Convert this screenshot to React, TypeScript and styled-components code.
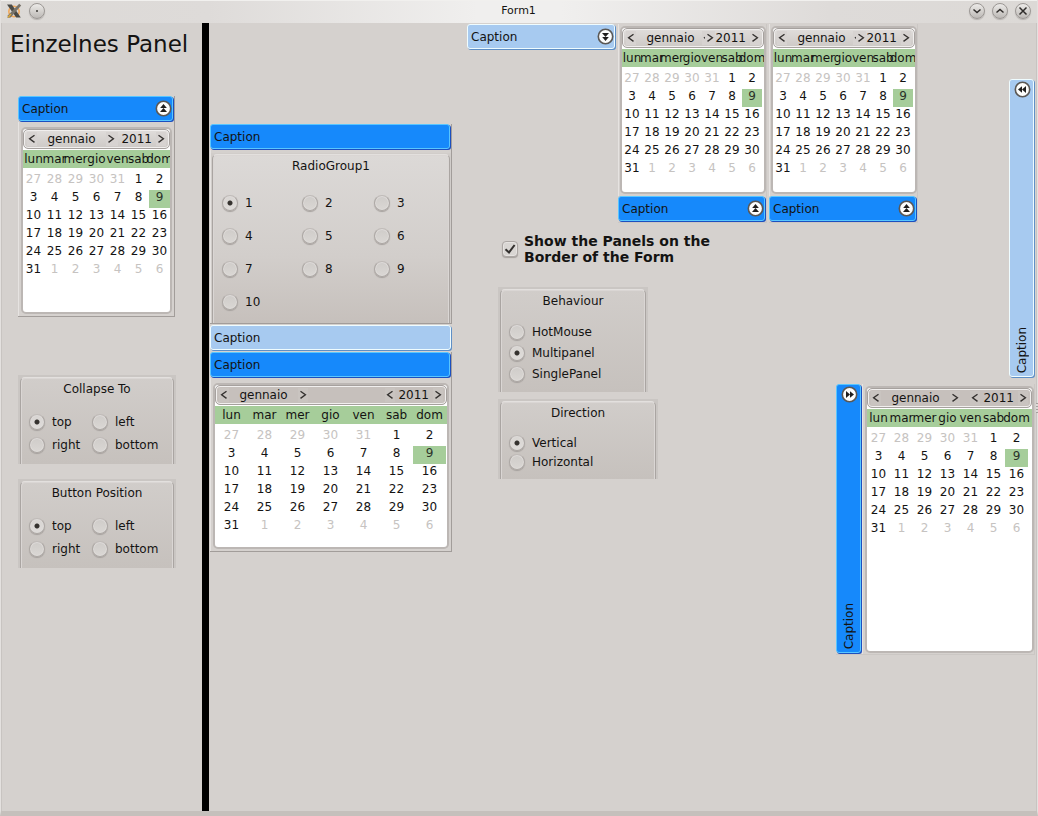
import React, { useId } from "react";
import styled, { createGlobalStyle, css } from "styled-components";

const GlobalStyle = createGlobalStyle`
  * { box-sizing: border-box; }
  body {
    margin: 0;
    font: 12px/14px "DejaVu Sans", Verdana, sans-serif;
    color: #141312;
    background: #d5d1ce;
  }
  button, input { margin: 0; padding: 0; font: inherit; color: inherit; }
`;

/* ---------- window frame ---------- */

const Window = styled.div`
  display: flex;
  flex-direction: column;
  min-height: 100vh;
  background: #d5d1ce;
  border-left: 1px solid #e4e1df;
  border-right: 1px solid #e4e1df;
  border-bottom: 5px solid #c5c0bc;
`;

const TitleBar = styled.header`
  display: grid;
  grid-template-columns: 1fr auto 1fr;
  align-items: center;
  height: 23px;
  padding: 0 6px 2px 5px;
  border-top: 1px solid #f1f0ee;
  background: linear-gradient(90deg, #dcd9d6 0%, #dedbd9 20%, #f0efee 46%, #f0efee 54%, #dedbd9 80%, #dcd9d6 100%);
`;

const Title = styled.h1`
  margin: 0;
  font-size: 11px;
  line-height: 14px;
  font-weight: normal;
`;

const TitleGroup = styled.div<{ $end?: boolean }>`
  display: flex;
  align-items: center;
  gap: 7px;
  justify-content: ${(p) => (p.$end ? "flex-end" : "flex-start")};
`;

const WindowButton = styled.button`
  display: grid;
  place-items: center;
  width: 16px;
  height: 16px;
  border: 1px solid #9b9794;
  border-radius: 50%;
  background: linear-gradient(#eceae8, #bdb9b6);
  box-shadow: 0 1px 1px #b5b1ae;
`;

const Body = styled.div`
  display: flex;
  flex: 1;
  align-items: stretch;
`;

const Aside = styled.aside`
  flex: none;
  width: 201px;
  padding: 0 0 0 16px;
  border-left: 1px solid #c8c4c1;
`;

const Heading = styled.h2`
  margin: 0 0 38px -8px;
  padding-top: 8px;
  font-size: 23px;
  line-height: 27px;
  font-weight: normal;
  white-space: nowrap;
`;

const Divider = styled.div`
  flex: none;
  width: 7px;
  background: #000;
`;

const Main = styled.main`
  position: relative;
  display: flex;
  flex: 1;
  min-width: 0;
  padding: 1px 1px 0 1px;
  border-right: 1px solid #c8c4c1;

  /* grip of the splitter on the window edge */
  &::after {
    content: "";
    position: absolute;
    top: 380px;
    right: -2px;
    width: 2px;
    height: 10px;
    background: repeating-linear-gradient(#a5a09d 0 1px, #dedbd9 1px 3px);
  }
`;

/* ---------- roll-out panels ---------- */

type Tone = "open" | "closed";

const Panel = styled.section<{ $row?: boolean; $faint?: boolean }>`
  display: flex;
  flex-direction: ${(p) => (p.$row ? "row" : "column")};
  border: 1px solid ${(p) => (p.$faint ? "#cbc7c4" : "#a29d9a")};
  border-width: 0 1px 1px 0;
`;

const PanelBody = styled.div<{ $pad: string }>`
  display: flex;
  flex: 1;
  flex-direction: column;
  min-width: 0;
  padding: ${(p) => p.$pad};
  border-left: 1px solid #e6e3e1;
`;

const captionTone = {
  open: css`
    background: #1689fb;
    border-color: #58c6ff;
    box-shadow: 1px 1px 0 #1c4fbf;
  `,
  closed: css`
    background: #a7caf0;
    border-color: #effcff;
    box-shadow: 1px 1px 0 #5f8fc6;
  `,
};

const CaptionBar = styled.header<{ $tone: Tone; $vertical?: boolean }>`
  display: flex;
  align-items: center;
  justify-content: space-between;
  flex: none;
  border-width: 1px;
  border-style: solid;
  border-radius: 3px;
  ${(p) => captionTone[p.$tone]}
  ${(p) =>
    p.$vertical
      ? css`
          flex-direction: column;
          width: 25px;
          margin: 0 1px 1px 0;
          padding: 0 0 3px;
        `
      : css`
          height: 25px;
          margin: 0 1px 1px 0;
          padding: 0 0 0 3px;
        `}
`;

const CaptionText = styled.span<{ $vertical?: boolean }>`
  ${(p) =>
    p.$vertical &&
    css`
      writing-mode: vertical-rl;
      transform: rotate(180deg);
    `}
`;

const RoundButton = styled.button`
  display: block;
  width: 19px;
  height: 19px;
  border: 0;
  background: none;
  svg { display: block; margin: 1px 0 1px 2px; }
`;

type Dir = "up" | "down" | "left" | "right";
const TURN: Record<Dir, number> = { up: 0, right: 90, down: 180, left: 270 };

function CollapseIcon({ dir }: { dir: Dir }) {
  return (
    <svg width="17" height="17" viewBox="0 0 17 17" aria-hidden="true">
      <circle cx="8.5" cy="8.5" r="7.2" fill="#fdfdfc" stroke="#5b5855" strokeWidth="1.6" />
      <g transform={`rotate(${TURN[dir]} 8.5 8.5)`} fill="#1f1d1c">
        <path d="M8.5 4 11.8 8H5.2Z" />
        <path d="M8.5 8 12 12H5Z" />
      </g>
    </svg>
  );
}

function Caption({ tone, dir, vertical }: { tone: Tone; dir?: Dir; vertical?: boolean }) {
  const button = dir && (
    <RoundButton type="button" aria-label={`Toggle panel ${dir}`}>
      <CollapseIcon dir={dir} />
    </RoundButton>
  );
  const text = <CaptionText $vertical={vertical}>Caption</CaptionText>;
  return (
    <CaptionBar $tone={tone} $vertical={vertical}>
      {vertical ? button : text}
      {vertical ? text : button}
    </CaptionBar>
  );
}

/* ---------- calendar ---------- */

const CalendarBox = styled.div<{ $height: number }>`
  min-height: ${(p) => p.$height}px;
  overflow: hidden;
  border: 2px solid #bcb7b4;
  border-radius: 5px;
  background: #fff;
`;

const Nav = styled.div<{ $dark?: boolean }>`
  display: grid;
  align-items: center;
  height: 20px;
  margin-bottom: 1px;
  border: 1px solid #a6a19e;
  border-radius: 5px;
  box-shadow: inset 0 0 0 1px #f1efee;
  background: ${(p) => (p.$dark ? "#c6c0bc" : "linear-gradient(#e0dddb, #cdc9c6)")};
  > * { grid-area: 1 / 1; }
`;

const NavGroup = styled.div<{ $end?: boolean }>`
  display: flex;
  align-items: center;
  justify-self: ${(p) => (p.$end ? "end" : "start")};
  z-index: ${(p) => (p.$end ? 0 : 1)};
  margin: 0 3px;
`;

const NavButton = styled.button<{ $dark?: boolean }>`
  display: grid;
  place-items: center;
  width: 10px;
  height: 14px;
  border: 0;
  background: ${(p) => (p.$dark ? "#c9c4c0" : "#d7d3d1")};
`;

const Month = styled.span`
  width: 69px;
  text-align: center;
`;

const Year = styled.span`
  padding: 0 4px 0 3px;
`;

const Days = styled.table`
  width: 100%;
  table-layout: fixed;
  border-collapse: collapse;
`;

const DayCol = styled.col<{ $width: number }>`
  width: ${(p) => p.$width}px;
`;

const WeekDay = styled.th`
  height: 18px;
  padding: 1px 0 0;
  font-weight: normal;
  line-height: 17px;
  text-align: center;
  white-space: nowrap;
  background: #a6cd9a;
  &:last-child { box-shadow: 4px 0 0 #a6cd9a; }
`;

/* Names wider than their column spill evenly over both neighbours. */
const DayName = styled.span`
  display: block;
  margin: 0 -8px;
`;

const Weeks = styled.tbody`
  &::before {
    content: "";
    display: table-row;
    height: 4px;
  }
`;

const Day = styled.td<{ $muted: boolean; $today: boolean }>`
  height: 18px;
  padding: 0 0 4px;
  text-align: center;
  color: ${(p) => (p.$muted ? "#c6c3c1" : p.$today ? "#2b332a" : "#141312")};
  background: ${(p) => (p.$today ? "#a6cd9a" : "transparent")};
`;

const WEEKDAYS = ["lun", "mar", "mer", "gio", "ven", "sab", "dom"];
const CELLS = Array.from({ length: 42 }, (_, i) => {
  const n = i - 4;
  return { label: n < 1 ? 31 + n : n > 31 ? n - 31 : n, muted: n < 1 || n > 31, today: n === 9 };
});
const WEEKS = Array.from({ length: 6 }, (_, w) => CELLS.slice(w * 7, w * 7 + 7));

function Chevron({ back }: { back?: boolean }) {
  return (
    <svg width="8" height="10" viewBox="0 0 8 10" aria-hidden="true">
      <path
        d={back ? "M6.5 1.2 1.6 4.8 6.5 8.4" : "M1.5 1.2 6.4 4.8 1.5 8.4"}
        fill="none"
        stroke="#353230"
        strokeWidth="1.4"
      />
    </svg>
  );
}

function Calendar({ col, height, dark }: { col: number; height: number; dark?: boolean }) {
  return (
    <CalendarBox $height={height}>
      <Nav $dark={dark}>
        <NavGroup>
          <NavButton type="button" $dark={dark} aria-label="Previous month"><Chevron back /></NavButton>
          <Month>gennaio</Month>
          <NavButton type="button" $dark={dark} aria-label="Next month"><Chevron /></NavButton>
        </NavGroup>
        <NavGroup $end>
          <NavButton type="button" $dark={dark} aria-label="Previous year"><Chevron back /></NavButton>
          <Year>2011</Year>
          <NavButton type="button" $dark={dark} aria-label="Next year"><Chevron /></NavButton>
        </NavGroup>
      </Nav>
      <Days>
        <colgroup>
          {WEEKDAYS.map((d) => <DayCol key={d} $width={col} />)}
          <col />
        </colgroup>
        <thead>
          <tr>{WEEKDAYS.map((d) => <WeekDay key={d} scope="col"><DayName>{d}</DayName></WeekDay>)}</tr>
        </thead>
        <Weeks>
          {WEEKS.map((week, w) => (
            <tr key={w}>
              {week.map((c, i) => <Day key={i} $muted={c.muted} $today={c.today}>{c.label}</Day>)}
            </tr>
          ))}
        </Weeks>
      </Days>
    </CalendarBox>
  );
}

/* ---------- radio groups ---------- */

type Look = "plain" | "light" | "compact";

const GroupBox = styled.div<{ $look: Look; $width?: number }>`
  display: flex;
  flex-direction: column;
  width: ${(p) => (p.$width ? `${p.$width}px` : "auto")};
  border: 2px solid #cac6c3;
  border-bottom: 0;
  background: #cac6c3;
  ${(p) => p.$look === "light" && css`border: 1px solid #d1cdca; border-bottom: 0; background: #d1cdca;`}
`;

const facePadding: Record<Look, string> = {
  plain: "3px 8px 6px",
  light: "3px 9px 5px",
  compact: "3px 8px 8px",
};

const GroupFace = styled.div<{ $look: Look }>`
  flex: 1;
  padding: ${(p) => facePadding[p.$look]};
  border: 1px solid #aaa5a2;
  border-top-color: #e3e0de;
  border-bottom: 0;
  border-radius: 5px 5px 0 0;
  box-shadow: inset 1px 1px 0 #dad6d4, inset -1px 0 0 #dad6d4;
  background: ${(p) =>
    p.$look === "light" ? "linear-gradient(#dcd9d7, #d2cecb 60%, #c6c0bc)" : "linear-gradient(#d1cdca, #c6c1bd)"};
`;

const GroupTitle = styled.div<{ $look: Look }>`
  margin-bottom: ${(p) => (p.$look === "plain" ? 13 : 12)}px;
  line-height: 16px;
  text-align: center;
`;

const Options = styled.div<{ $columns: string; $row: number }>`
  display: grid;
  grid-template-columns: ${(p) => p.$columns};
  grid-auto-rows: ${(p) => p.$row}px;
  align-items: center;
`;

const Option = styled.label`
  display: flex;
  align-items: center;
  gap: 7px;
  white-space: nowrap;
`;

const RadioInput = styled.input`
  flex: none;
  appearance: none;
  width: 16px;
  height: 16px;
  border: 1px solid #aca7a4;
  border-top-color: #c0bbb8;
  border-radius: 50%;
  background: linear-gradient(#cfccc9, #dad7d4);
  box-shadow: inset 0 0 0 1px #dedbd9, 0 1px 1px #a5a09d;
  &:checked {
    background: radial-gradient(circle, #35322f 0 2px, transparent 3px), linear-gradient(#d8d5d2, #dfdcda);
  }
`;

function RadioGroup(props: {
  title: string;
  items: string[];
  selected: string;
  columns?: string;
  row: number;
  look?: Look;
  width?: number;
}) {
  const id = useId();
  const look = props.look ?? "plain";
  return (
    <GroupBox role="radiogroup" aria-labelledby={id} $look={look} $width={props.width}>
      <GroupFace $look={look}>
        <GroupTitle id={id} $look={look}>{props.title}</GroupTitle>
        <Options $columns={props.columns ?? "1fr"} $row={props.row}>
          {props.items.map((item) => (
            <Option key={item}>
              <RadioInput type="radio" name={id} defaultChecked={item === props.selected} />
              {item}
            </Option>
          ))}
        </Options>
      </GroupFace>
    </GroupBox>
  );
}

/* ---------- page areas ---------- */

const AsidePanel = styled.div`
  width: 157px;
  margin-bottom: 58px;
`;

const AsideGroups = styled.div`
  display: grid;
  grid-auto-rows: 89px;
  gap: 15px;
  width: 158px;
`;

const Stack = styled.div`
  display: flex;
  flex: none;
  flex-direction: column;
  gap: 1px;
  width: 242px;
  padding-top: 100px;
`;

const FormArea = styled.div`
  display: grid;
  flex: 1;
  min-width: 0;
  grid-template-columns: 1fr 199px;
  grid-template-rows: auto 1fr;
  margin-left: 15px;
`;

const TopStrip = styled.div`
  display: flex;
  grid-area: 1 / 1 / 2 / 3;
  align-items: flex-start;
  gap: 2px;
  > * { width: 149px; flex: none; }
  > header { width: 148px; }
`;

const Settings = styled.div`
  display: flex;
  flex-direction: column;
  grid-area: 2 / 1;
  align-items: flex-start;
  gap: 7px;
  padding: 10px 0 0 31px;
`;

const CheckLabel = styled.label`
  display: flex;
  align-items: center;
  gap: 6px;
  margin-bottom: 15px;
  padding-left: 4px;
  font-size: 14px;
  line-height: 16px;
  font-weight: bold;
`;

const CheckText = styled.span`
  width: 200px;
`;

const CheckFrame = styled.span`
  display: grid;
  flex: none;
  > * { grid-area: 1 / 1; }
  svg { pointer-events: none; }
`;

const CheckInput = styled.input`
  appearance: none;
  width: 16px;
  height: 16px;
  border: 1px solid #aca7a4;
  border-radius: 4px;
  background: #d9d6d3;
  box-shadow: inset 0 0 0 1px #e6e3e1, 0 1px 1px #a5a09d;
`;

const Rail = styled.div`
  display: flex;
  flex-direction: column;
  grid-area: 1 / 2 / 3 / 3;
  align-items: flex-end;
  gap: 6px;
  padding-top: 55px;
`;

const RailTab = styled.div`
  display: flex;
  min-height: 299px;
`;

const RailPanel = styled(Panel)`
  align-self: stretch;
`;

export default function App() {
  return (
    <>
      <GlobalStyle />
      <Window>
        <TitleBar>
          <TitleGroup>
            <svg width="16" height="16" viewBox="0 0 16 16" aria-hidden="true">
              <circle cx="8" cy="8.5" r="5.2" fill="none" stroke="#f2a95c" strokeWidth="1.6" />
              <path d="M1 1.5H5.8L14.8 14.5H10.2Z" fill="#4a4a46" />
              <path d="M13.2 0.8 15.2 2.4 4.6 14.6 1.5 15 2 12.2Z" fill="#77736a" />
              <path d="M2 14.6 5 11" stroke="#d9a53c" strokeWidth="1.6" />
            </svg>
            <WindowButton type="button" aria-label="Window menu">
              <svg width="4" height="4" viewBox="0 0 4 4"><circle cx="2" cy="2" r="1" fill="#3b3835" /></svg>
            </WindowButton>
          </TitleGroup>
          <Title>Form1</Title>
          <TitleGroup $end>
            {[
              ["Minimize", "M1.5 3.5 5 6.5 8.5 3.5"],
              ["Maximize", "M1.5 6.5 5 3.5 8.5 6.5"],
              ["Close", "M1.5 1.5 8.5 8.5M8.5 1.5 1.5 8.5"],
            ].map(([label, d]) => (
              <WindowButton key={label} type="button" aria-label={label}>
                <svg width="10" height="10" viewBox="0 0 10 10">
                  <path d={d} fill="none" stroke="#2f2c2a" strokeWidth="1.5" />
                </svg>
              </WindowButton>
            ))}
          </TitleGroup>
        </TitleBar>

        <Body>
          <Aside>
            <Heading>Einzelnes Panel</Heading>
            <AsidePanel>
              <Panel>
                <Caption tone="open" dir="up" />
                <PanelBody $pad="5px 2px 2px">
                  <Calendar col={21} height={187} />
                </PanelBody>
              </Panel>
            </AsidePanel>
            <AsideGroups>
              <RadioGroup title="Collapse To" items={["top", "left", "right", "bottom"]} selected="top" columns="63px 1fr" row={23} />
              <RadioGroup title="Button Position" items={["top", "left", "right", "bottom"]} selected="top" columns="63px 1fr" row={23} />
            </AsideGroups>
          </Aside>

          <Divider />

          <Main>
            <Stack>
              <Panel>
                <Caption tone="open" />
                <PanelBody $pad="3px 0 0">
                  <RadioGroup
                    title="RadioGroup1"
                    items={["1", "2", "3", "4", "5", "6", "7", "8", "9", "10"]}
                    selected="1"
                    columns="80px 72px 1fr"
                    row={33}
                    look="light"
                  />
                </PanelBody>
              </Panel>
              <Caption tone="closed" />
              <Panel>
                <Caption tone="open" />
                <PanelBody $pad="5px 2px 2px">
                  <Calendar col={33} height={166} dark />
                </PanelBody>
              </Panel>
            </Stack>

            <FormArea>
              <TopStrip>
                <Caption tone="closed" dir="down" />
                {[0, 1].map((n) => (
                  <Panel key={n} $faint>
                    <PanelBody $pad="2px 0 2px 1px">
                      <Calendar col={20} height={168} />
                    </PanelBody>
                    <Caption tone="open" dir="up" />
                  </Panel>
                ))}
              </TopStrip>

              <Settings>
                <CheckLabel>
                  <CheckFrame>
                    <CheckInput type="checkbox" defaultChecked />
                    <svg width="16" height="16" viewBox="0 0 16 16" aria-hidden="true">
                      <path d="M3.5 8.2 7 11.4 12.6 4" fill="none" stroke="#33302e" strokeWidth="2" />
                    </svg>
                  </CheckFrame>
                  <CheckText>Show the Panels on the Border of the Form</CheckText>
                </CheckLabel>
                <RadioGroup title="Behaviour" items={["HotMouse", "Multipanel", "SinglePanel"]} selected="Multipanel" row={21} look="compact" width={150} />
                <RadioGroup title="Direction" items={["Vertical", "Horizontal"]} selected="Vertical" row={19} look="compact" width={160} />
              </Settings>

              <Rail>
                <RailTab>
                  <Caption tone="closed" dir="left" vertical />
                </RailTab>
                <RailPanel $row $faint>
                  <Caption tone="open" dir="right" vertical />
                  <PanelBody $pad="2px 0 1px 2px">
                    <Calendar col={23} height={267} dark />
                  </PanelBody>
                </RailPanel>
              </Rail>
            </FormArea>
          </Main>
        </Body>
      </Window>
    </>
  );
}
